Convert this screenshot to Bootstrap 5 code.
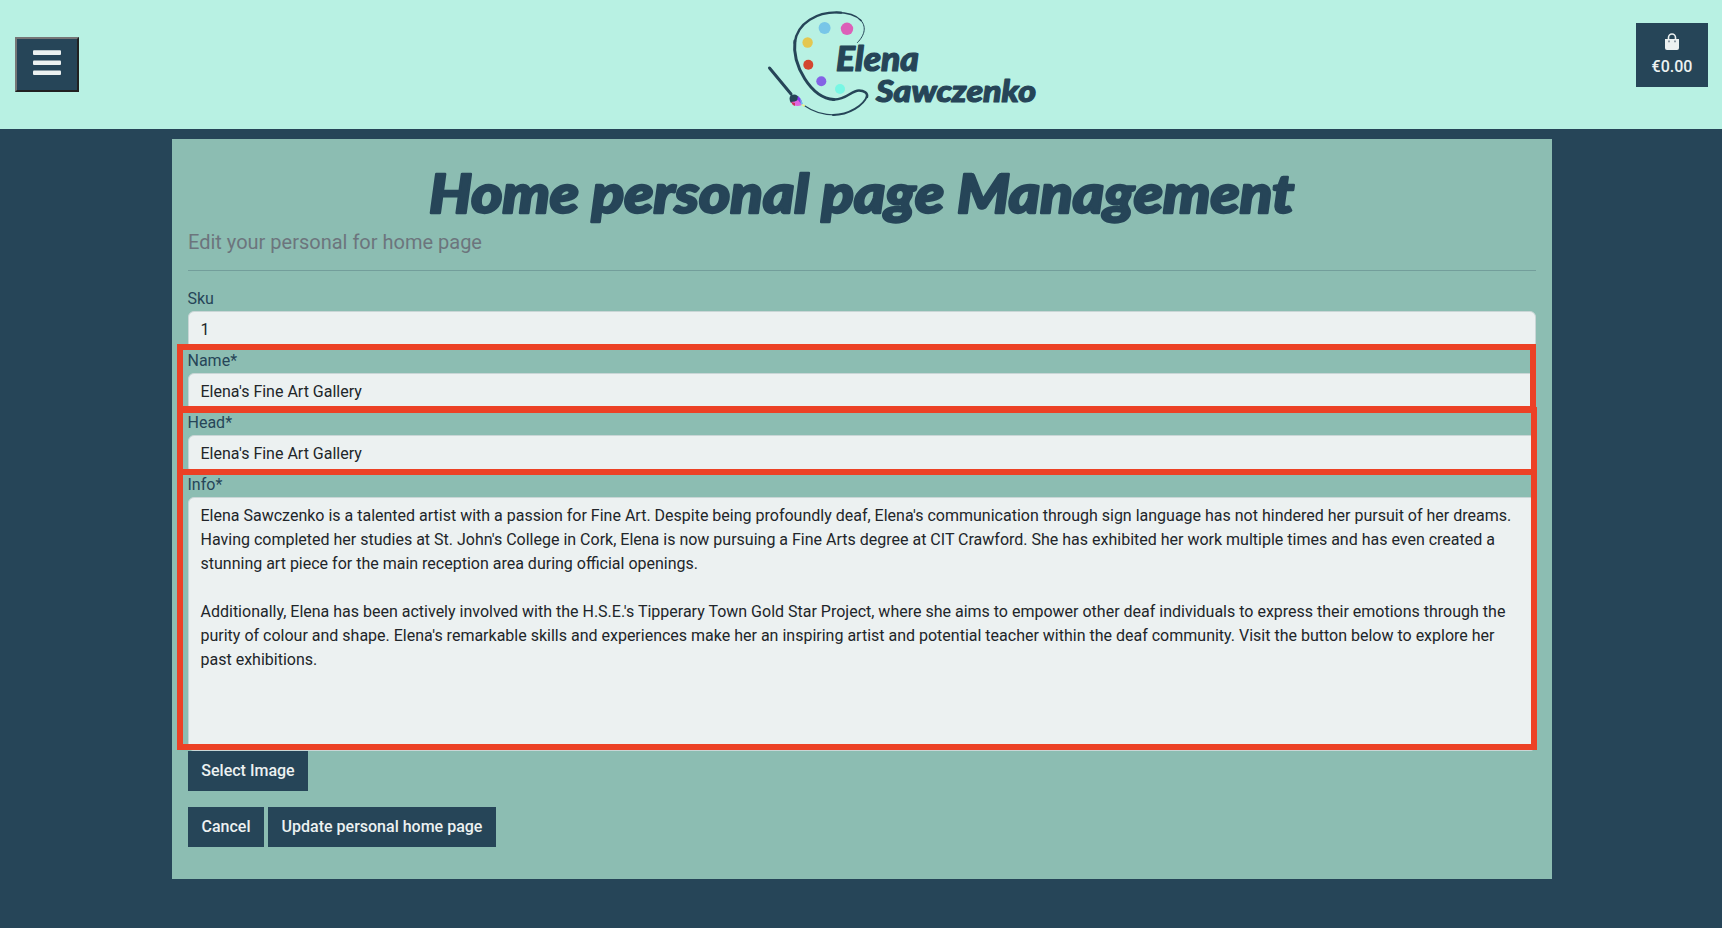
<!DOCTYPE html>
<html lang="en">
<head>
<meta charset="utf-8">
<meta name="viewport" content="width=device-width, initial-scale=1">
<title>Home personal page Management</title>
<link href="https://cdn.jsdelivr.net/npm/bootstrap@5.3.0/dist/css/bootstrap.min.css" rel="stylesheet">
<style>
  body { background: #264558; color: #264558; font-family: Roboto, sans-serif; height: 928px; overflow: hidden; }
  .site-header { background: #b8f1e3; height: 129px; padding: 0 14px 0 15px; }
  .menu-btn { width: 64px; height: 55px; margin-top: 37px; padding: 0 0 3px; background: #264558; border: 2px solid; border-color: #767676 #212121 #212121 #767676; }
  .bag-btn { width: 72px; height: 64px; margin-top: 23px; background: #264558; color: #ecf1f1; font-weight: 500; line-height: 24px; padding-top: 8px; }
  .site-logo { width: 300px; height: 129px; margin-left: 85px; }
  .panel { width: 1380px; height: 740px; margin: 10px 0 0 172px; padding: 28px 16px 32px; background: #8cbdb2; }
  .page-title { font-family: Lato, sans-serif; font-weight: 900; font-style: italic; font-size: 54px; line-height: 60px; margin: 0; white-space: nowrap; }
  .page-title svg { display: block; width: 1348px; height: 60px; overflow: visible; }
  .subtitle { font-size: 20px; line-height: 30px; color: #6c757d; }
  .rule { border: 0; border-top: 1px solid #264558; opacity: .25; margin: 13px 0 16px; }
  .field { position: relative; }
  .field label { display: block; line-height: 24px; margin-left: -.5px; }
  .form-control, .form-control:focus { background: #ecf1f1; color: #212529; border-color: #c9d6d6; height: 38px; padding: 5px 11.5px 7px; }
  textarea.form-control { height: 254px !important; padding: 6px 11.5px; resize: none; overflow: hidden; }
  .outline { position: absolute; left: -11px; border: 6px solid #ec4125; pointer-events: none; z-index: 2; }
  .o-name { top: -5px; width: 1359px; height: 68px; }
  .o-head { top: -4px; width: 1360px; height: 68px; }
  .o-info { top: -4px; width: 1360px; height: 281px; }
  .art-btn, .art-btn:hover { background: #264558; color: #ecf1f1; border: 0; border-radius: 0; height: 40px; padding: 0; font-weight: 500; }
</style>
</head>
<body>
<header class="site-header d-flex justify-content-between align-items-start">
  <button class="menu-btn" type="button" aria-label="Menu">
    <svg class="d-block mx-auto" width="28" height="26" viewBox="0 0 28 26" fill="#ecf1f1"><rect width="28" height="4.6" y="0.3" rx="1"/><rect width="28" height="4.6" y="10.4" rx="1"/><rect width="28" height="4.6" y="20.4" rx="1"/></svg>
  </button>
  <svg class="site-logo" viewBox="0 0 300 129" role="img">
    <g fill="none" stroke="#264558" stroke-linecap="round">
      <path stroke-width="1" d="M107.500 42.500C115 35 117 26 110 19.500"/>
      <path stroke-width="1.700" d="M111 20.500C106 15 96 12.500 86 12.500"/>
      <path stroke-width="2.300" d="M91 12.600C67 11 47 23 44.700 43"/>
      <path stroke-width="3" d="M44.900 41C42 65 61 98 84 99.500"/>
      <path stroke-width="2.500" d="M83 99.500C96 100.500 101 90.500 109 90.500C114 90.500 118 93 117 97"/>
      <path stroke-width="1.900" d="M117 96C114 105 99 115 83 115"/>
      <path stroke-width="1.100" d="M85 115C73 115 62 111 55 106"/>
      <path stroke-width="3" d="M19.500 68L41 94"/>
    </g>
    <circle cx="74.600" cy="28" r="6" fill="#78c6e8"/><circle cx="97" cy="28.800" r="6.200" fill="#dc60b8"/>
    <circle cx="57.600" cy="42.500" r="5.200" fill="#e4c750"/><circle cx="58.300" cy="64.700" r="5" fill="#d34630"/>
    <circle cx="71.300" cy="81.300" r="5" fill="#8463e5"/><circle cx="90" cy="89" r="5" fill="#78f7e4"/>
    <path fill="#264558" d="M41 95q6-2 8 3l-2 4-6 1q-3-5 0-8z"/>
    <path fill="#8a36ef" d="M48 96q5 4 4 9l-5-4z"/>
    <path fill="#df65df" d="M41 102q4 0 7-2l4 5q-5 2-8 0z"/>
    <path fill="#ce335d" d="M41 102l4 1v3q-3-1-4-4z"/>
    <path fill="#71bdf0" d="M50 98l3 6-2 1z"/><path fill="#f0ee79" d="M51 104l4 1-1 2z"/>
    <g fill="#264558" stroke="#264558" stroke-width="1.200" stroke-linejoin="round" font-family="Lato, sans-serif" font-weight="900" font-style="italic">
      <text x="86" y="71" font-size="34" textLength="83" lengthAdjust="spacingAndGlyphs">Elena</text>
      <text x="126" y="101.800" font-size="31" textLength="160" lengthAdjust="spacingAndGlyphs">Sawczenko</text>
    </g>
  </svg>
  <div class="bag-btn text-center">
    <svg class="d-block mx-auto" width="14" height="24" viewBox="0 0 14 24"><path d="M3.500 9V6.500a3.500 3.500 0 0 1 7 0V9" fill="none" stroke="#ecf1f1" stroke-width="1.600"/><path fill="#ecf1f1" d="M0 8h14v9q0 2-2 2H2q-2 0-2-2z"/><path fill="#8d9ba5" d="M3 9.500h2v1.700H3zM9 9.500h2v1.700H9z"/></svg>
    <span class="d-block">€0.00</span>
  </div>
</header>

<main class="panel">
  <h1 class="page-title"><svg><text x="241" y="46" fill="#264558" stroke="#264558" stroke-width="2.400" stroke-linejoin="round" textLength="865" lengthAdjust="spacingAndGlyphs">Home personal page Management</text></svg></h1>
  <p class="subtitle m-0">Edit your personal for home page</p>
  <hr class="rule">
  <form>
    <div class="field"><label for="sku">Sku</label><input id="sku" class="form-control" value="1"></div>
    <div class="field"><label for="name">Name*</label><input id="name" class="form-control" value="Elena's Fine Art Gallery"><span class="outline o-name"></span></div>
    <div class="field"><label for="head">Head*</label><input id="head" class="form-control" value="Elena's Fine Art Gallery"><span class="outline o-head"></span></div>
    <div class="field"><label for="info">Info*</label><textarea id="info" class="form-control d-block">Elena Sawczenko is a talented artist with a passion for Fine Art. Despite being profoundly deaf, Elena's communication through sign language has not hindered her pursuit of her dreams. Having completed her studies at St. John's College in Cork, Elena is now pursuing a Fine Arts degree at CIT Crawford. She has exhibited her work multiple times and has even created a stunning art piece for the main reception area during official openings.

Additionally, Elena has been actively involved with the H.S.E.'s Tipperary Town Gold Star Project, where she aims to empower other deaf individuals to express their emotions through the purity of colour and shape. Elena's remarkable skills and experiences make her an inspiring artist and potential teacher within the deaf community. Visit the button below to explore her past exhibitions.</textarea><span class="outline o-info"></span></div>
    <button type="button" class="btn art-btn d-block" style="width:120px">Select Image</button>
    <div class="d-flex gap-1 mt-3">
      <button type="button" class="btn art-btn" style="width:76px">Cancel</button>
      <button type="button" class="btn art-btn" style="width:228px">Update personal home page</button>
    </div>
  </form>
</main>
<script src="https://cdn.jsdelivr.net/npm/bootstrap@5.3.0/dist/js/bootstrap.bundle.min.js"></script>
</body>
</html>
